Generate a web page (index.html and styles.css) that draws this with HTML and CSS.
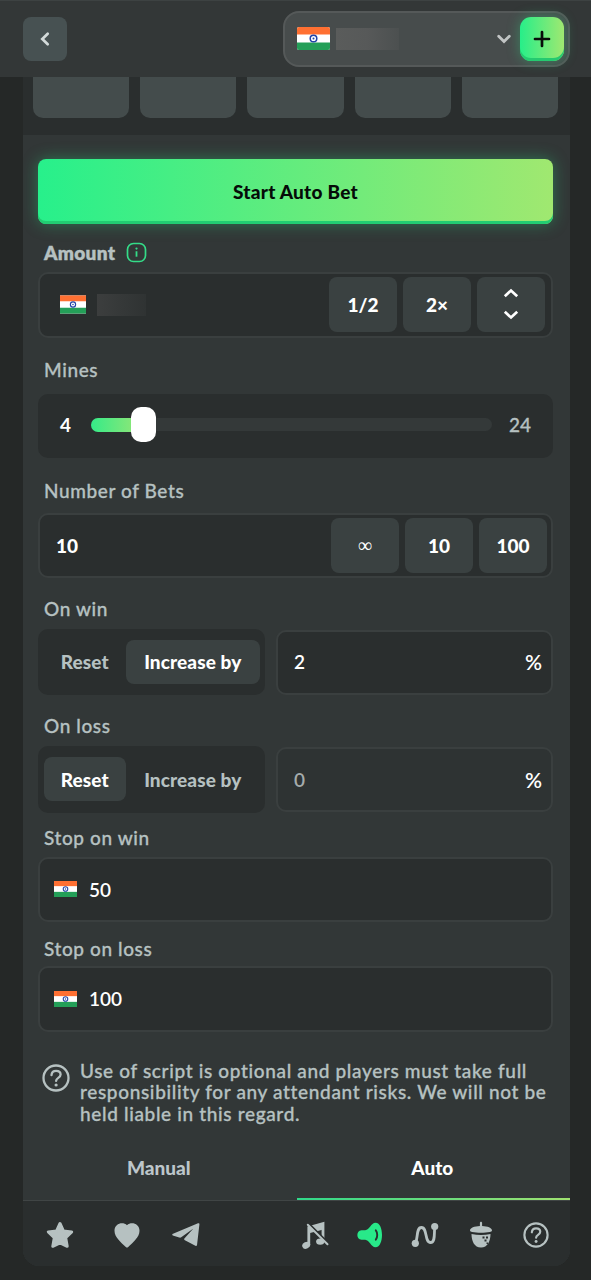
FILE: index.html
```
<!DOCTYPE html>
<html lang="en">
<head>
  <meta charset="UTF-8">
  <meta name="viewport" content="width=device-width, initial-scale=1.0">
  <title>Mines</title>
  <link rel="stylesheet" href="styles.css">
</head>
<body>
  <svg class="Sprite" aria-hidden="true">
    <symbol id="flag" viewBox="0 0 33 23">
      <path fill="#fff" d="M0 0h33v23H0z"/>
      <path fill="#ff7032" d="M0 0h33v7.4H0z"/>
      <path fill="#249f58" d="M0 15.6h33V23H0z"/>
      <circle cx="16.5" cy="11.5" r="3.3" fill="#fff" stroke="#2445a8" stroke-width="1.5"/>
      <circle cx="16.5" cy="11.5" r="1" fill="#2445a8"/>
    </symbol>
    <symbol id="help" viewBox="0 0 28 28">
      <g fill="none" stroke="currentColor" stroke-width="2.3" stroke-linecap="round">
        <circle cx="14" cy="14" r="12.5"/>
        <path d="M9.5 11.1c.2-2.600 2-4.300 4.600-4.300 2.700 0 4.500 1.500 4.500 3.800 0 3.400-4.500 3.200-4.500 6.300"/>
      </g>
      <circle cx="14.100" cy="21" r="1.600" fill="currentColor"/>
    </symbol>
  </svg>

  <header class="Header">
    <button class="Header_Back" aria-label="Back">
      <svg width="12" height="16" viewBox="0 0 12 16"><path d="M8.700 2.700 3.300 8l5.400 5.300" fill="none" stroke="#d3dada" stroke-width="2.700" stroke-linecap="round"/></svg>
    </button>
    <div class="Wallet">
      <svg class="Wallet_Flag" width="33" height="23"><use href="#flag"/></svg>
      <span class="Wallet_Balance"></span>
      <svg class="Wallet_Arrow" width="16" height="12" viewBox="0 0 16 12"><path d="m2.700 3.200 5.300 5.300 5.300-5.300" fill="none" stroke="#c2c5c5" stroke-width="2.800" stroke-linecap="round"/></svg>
      <button class="Wallet_Add" aria-label="Deposit">
        <svg width="18" height="18" viewBox="0 0 18 18"><path d="M9 2v14M2 9h14" stroke="#080d0a" stroke-width="2.700" stroke-linecap="round"/></svg>
      </button>
    </div>
  </header>

  <main class="Game">
    <div class="Tiles">
      <span class="Tile"></span>
      <span class="Tile"></span>
      <span class="Tile"></span>
      <span class="Tile"></span>
      <span class="Tile"></span>
    </div>

    <div class="Panel">
      <button class="Start">Start Auto Bet</button>

      <div class="Label -amount">
        <span class="Label_Text">Amount</span>
        <svg width="21" height="21" viewBox="0 0 21 21"><rect x="1.500" y="1.500" width="18" height="18" rx="6" fill="none" stroke="#34dc88" stroke-width="1.700"/><path d="M10.500 9.300v5.400" stroke="#34dc88" stroke-width="1.800"/><circle cx="10.500" cy="6.600" r="1.100" fill="#34dc88"/></svg>
      </div>
      <div class="Field -amount">
        <svg width="26" height="19"><use href="#flag"/></svg>
        <span class="Field_Hidden"></span>
        <div class="Field_Buttons">
          <button class="Chip">1/2</button>
          <button class="Chip">2×</button>
          <button class="Chip" aria-label="Adjust">
            <svg width="18" height="38" viewBox="0 0 18 38"><path d="m2.800 11.200 6.200-5.700 6.200 5.700M2.800 26.800 9 32.500l6.200-5.700" fill="none" stroke="#fff" stroke-width="2.700"/></svg>
          </button>
        </div>
      </div>

      <div class="Label -mines">Mines</div>
      <div class="Slider">
        <span class="Slider_Value">4</span>
        <div class="Slider_Track">
          <div class="Slider_Fill"></div>
          <div class="Slider_Thumb"></div>
        </div>
        <span class="Slider_Max">24</span>
      </div>

      <div class="Label -bets">Number of Bets</div>
      <div class="Field -bets">
        <span class="Field_Value -bold">10</span>
        <div class="Field_Buttons">
          <button class="Chip -infinity">∞</button>
          <button class="Chip">10</button>
          <button class="Chip">100</button>
        </div>
      </div>

      <div class="Label -win">On win</div>
      <div class="Row">
        <div class="Toggle">
          <button class="Toggle_Item -reset">Reset</button>
          <button class="Toggle_Item -increase -active">Increase by</button>
        </div>
        <div class="Field -percent">
          <span class="Field_Value">2</span>
          <span class="Field_Unit">%</span>
        </div>
      </div>

      <div class="Label -loss">On loss</div>
      <div class="Row -loss">
        <div class="Toggle">
          <button class="Toggle_Item -reset -active">Reset</button>
          <button class="Toggle_Item -increase">Increase by</button>
        </div>
        <div class="Field -percent -disabled">
          <span class="Field_Value">0</span>
          <span class="Field_Unit">%</span>
        </div>
      </div>

      <div class="Label -stopWin">Stop on win</div>
      <div class="Field -stop">
        <svg width="23" height="16"><use href="#flag"/></svg>
        <span class="Field_Value">50</span>
      </div>

      <div class="Label -stopLoss">Stop on loss</div>
      <div class="Field -stop -last">
        <svg width="23" height="16"><use href="#flag"/></svg>
        <span class="Field_Value">100</span>
      </div>

      <div class="Note">
        <svg width="28" height="28"><use href="#help"/></svg>
        <p class="Note_Text">
          <span class="Note_Line">Use of script is optional and players must take full</span>
          <span class="Note_Line">responsibility for any attendant risks. We will not be</span>
          <span class="Note_Line">held liable in this regard.</span>
        </p>
      </div>
    </div>

    <nav class="Tabs">
      <a class="Tab">Manual</a>
      <a class="Tab -active">Auto</a>
    </nav>

    <footer class="Tools">
      <svg width="28" height="28" viewBox="0 0 28 28"><path d="m14 2.500 3.400 7.400 8.300 1-6 5.800 1.500 8.600-7.200-3.400-7.200 3.400 1.500-8.600-6-5.800 8.300-1z" fill="currentColor" stroke="currentColor" stroke-width="3" stroke-linejoin="round"/></svg>
      <svg class="Tools_Heart" width="28" height="28" viewBox="0 0 28 28"><path d="M12.800 25.900C8 21.300 1.500 16.300 1.500 9.700 1.500 2.400 10 .3 14 4.300c4-4 12.500-1.900 12.500 5.400 0 6.600-6.500 11.600-11.300 16.200-.8.700-1.600.7-2.400 0z" fill="currentColor"/></svg>
      <svg class="Tools_Send" width="28" height="26" viewBox="0 0 28 26"><path d="M.8 13.400c-.8-.4-.7-1.300.2-1.600L26 1.300c1-.4 1.500.1 1.400 1.100l-2.300 20c-.1 1.400-1 1.900-2.200 1.200l-10-5.400c-1-.5-1-1.200-.3-2l8.800-9.600L9.600 15c-.8.6-1.500.8-2.400.5z" fill="currentColor"/></svg>
      <svg class="Tools_Music" width="28" height="28" viewBox="0 0 28 28"><path d="M7.800 24V6.600L22 2.700V20" fill="none" stroke="currentColor" stroke-width="2.800"/><path d="M8 6.300 23 2v6.300l-7 2L9 12z" fill="currentColor"/><ellipse cx="5.200" cy="24.300" rx="4.100" ry="3.300" fill="currentColor" transform="rotate(-25 5.200 24.300)"/><ellipse cx="19.200" cy="20.600" rx="4.100" ry="3.200" fill="currentColor"/><path d="m7.800 2.700 20 20" stroke="#2a2e2e" stroke-width="2.200"/><path d="m6.800 3.800 19.700 19.500" stroke="currentColor" stroke-width="2" stroke-linecap="round"/></svg>
      <svg class="Tools_Sound" width="28" height="28" viewBox="0 0 28 28"><path d="M5.500 9.300h3.700C13.500 9 15 1.800 19.500 1.800 24 1.800 26 8 26 14s-2 12.200-6.500 12.200c-4.500 0-6-7.200-10.300-7.500H5.500C0 18.700 0 9.300 5.500 9.300z" fill="#28e989"/><path d="M19.800 9.300c1.900 2.400 1.900 7 0 9.400" fill="none" stroke="#2a2e2e" stroke-width="1.900" stroke-linecap="round"/></svg>
      <svg class="Tools_Curve" width="28" height="28" viewBox="0 0 28 28"><path d="M4.500 22C7.200 17 5 6.500 10.500 6.500c6 0 3 15 9 15 5 0 3.500-9 4.200-15" fill="none" stroke="currentColor" stroke-width="2.800"/><circle cx="4.300" cy="22.300" r="3.600" fill="currentColor"/><circle cx="23.700" cy="5.500" r="3.600" fill="currentColor"/></svg>
      <svg class="Tools_Acorn" width="24" height="28" viewBox="0 0 24 28"><path d="M10.900 1.800c.1-1.500 2.100-1.500 2.200 0V5C18.500 5.200 23 7 23 9.200c0 1-1 1.500-2.200 1.800-5 1.100-12.600 1.100-17.600 0C2 10.700 1 10.200 1 9.200 1 7 5.500 5.200 10.900 5zM2.500 13c6 1.300 13 1.300 19 0 0 7-2.800 13.500-9.500 13.500S2.500 20 2.500 13z" fill="currentColor"/><path d="M13.500 15.500h2v2h-2zm3.500 0h2v2h-2zm-1.500 3h2v2h-2zm2 3h1.500V23h-1.500z" fill="#2a2e2e"/></svg>
      <svg class="Tools_Help" width="26" height="26"><use href="#help"/></svg>
    </footer>
  </main>
</body>
</html>
```
FILE: styles.css
```
* {
  box-sizing: border-box;
}

body {
  --_panel: #323737;
  --_dark: #2a2e2e;
  --_chip: #3a4141;
  --_line: #404545;
  --_gray: #b6c1c1;

  height: 1280px;
  margin: 0;
  overflow: hidden;
  background-color: #252827;
  color: #fff;
  font-family: Lato, "Liberation Sans", sans-serif;
  font-size: 19px;
  font-weight: 500;
}

button {
  padding: 0;
  border: 0;
  color: inherit;
  font: inherit;
}

svg {
  display: block;
  flex-shrink: 0;
}

.Sprite {
  position: absolute;
  width: 0;
  height: 0;
}

/* ヘッダー */
.Header {
  display: flex;
  align-items: center;
  justify-content: space-between;
  height: 77px;
  padding: 0 21px 1px 23px;
  border-top: 1px solid #3d4242;
  background-color: #333737;
}

.Header_Back {
  display: grid;
  place-items: center;
  width: 44px;
  height: 44px;
  border-radius: 8px;
  background-color: #475152;
}

.Wallet {
  display: flex;
  align-items: center;
  width: 287px;
  height: 56px;
  padding: 0 4px 0 12px;
  border: 2px solid #555959;
  border-radius: 16px;
  background-color: #474c4c;
}

.Wallet_Flag {
  border-radius: 2px;
}

.Wallet_Balance {
  width: 63px;
  height: 22px;
  margin-left: 6px;
  background: linear-gradient(90deg, #5a5c5b, #575959 50%, #4c5050);
}

.Wallet_Arrow {
  margin-left: auto;
}

.Wallet_Add {
  display: grid;
  place-items: center;
  width: 44px;
  height: 44px;
  margin-left: 8px;
  border-radius: 11px;
  background: linear-gradient(90deg, #27ee89, #9fe871);
  box-shadow: inset 0 -3px #25ca70, 0 0 13px rgba(40, 237, 137, 0.35);
}

.Game {
  width: 547px;
  height: 1189px;
  margin-left: 23px;
  overflow: hidden;
  border-radius: 0 0 16px 16px;
  background-color: var(--_panel);
}

.Tiles {
  display: grid;
  grid-template-columns: repeat(5, 1fr);
  gap: 11px;
  height: 58px;
  padding: 0 12px 17px 10px;
  background-color: var(--_dark);
}

.Tile {
  border-radius: 0 0 10px 10px;
  background-color: #444c4c;
}

.Panel {
  height: 1003px;
  padding: 24px 17px 0 15px;
}

.Start {
  display: block;
  width: 100%;
  height: 65px;
  padding-bottom: 1px;
  border-radius: 8px;
  background: linear-gradient(90deg, #27f08b, #a0e870);
  box-shadow: inset 0 -3px #22cd72, 0 0 16px rgba(40, 237, 137, 0.35);
  color: #050b08;
  font-weight: 900;
  letter-spacing: 0.25px;
}

.Label {
  display: flex;
  align-items: center;
  height: 24px;
  padding-bottom: 2px;
  margin-left: 6px;
  color: var(--_gray);
  letter-spacing: 0.6px;
  -webkit-text-stroke: 0.3px;
}

.Label.-amount {
  gap: 11px;
  margin-top: 17px;
  margin-bottom: 7px;
  padding-bottom: 1px;
  font-weight: 800;
  letter-spacing: 0.3px;
}

.Label.-mines {
  margin-top: 20px;
  margin-bottom: 12px;
}

.Label.-bets {
  margin-top: 21px;
  margin-bottom: 10px;
}

.Label.-win,
.Label.-loss {
  margin-top: 19px;
  margin-bottom: 8px;
}

.Label.-stopWin {
  margin-top: 13px;
  margin-bottom: 7px;
}

.Label.-stopLoss {
  margin-top: 15px;
  margin-bottom: 5px;
}

/* 入力欄 */
.Field {
  display: flex;
  align-items: center;
  height: 65px;
  padding: 0 16px;
  border: 2px solid #3a3f3f;
  border-radius: 10px;
  background-color: var(--_dark);
}

.Field.-amount {
  height: 66px;
  padding-bottom: 1px;
  padding-left: 20px;
  padding-right: 6px;
}

.Field.-bets {
  padding-right: 4px;
}

.Field.-stop {
  gap: 12px;
  padding-bottom: 1px;
  padding-left: 14px;
}

.Field.-last {
  height: 66px;
}

.Field.-percent {
  flex: 1;
  justify-content: space-between;
  padding-bottom: 1px;
  padding-right: 9px;
}

.Field.-disabled {
  background-color: #2e3333;
}

.Field.-disabled .Field_Value {
  color: #a5acac;
}

.Field_Hidden {
  width: 49px;
  height: 22px;
  margin-left: 11px;
  background: linear-gradient(90deg, #3c3e3e, #2f3333);
}

.Field_Value {
  font-weight: 600;
}

.Field_Value.-bold {
  padding-bottom: 1px;
  font-weight: 900;
}

.Field_Unit {
  font-size: 21px;
  font-weight: 600;
}

.Field_Buttons {
  display: flex;
  gap: 6px;
  margin-left: auto;
}

.Chip {
  display: grid;
  place-items: center;
  width: 68px;
  height: 55px;
  padding-bottom: 1px;
  border-radius: 8px;
  background-color: var(--_chip);
  font-weight: 900;
}

.Chip.-infinity {
  font-family: "Liberation Serif", serif;
  font-size: 20px;
  font-weight: 400;
}

/* スライダー */
.Slider {
  display: flex;
  align-items: center;
  height: 64px;
  padding: 0 22px 3px;
  border-radius: 10px;
  background-color: var(--_dark);
}

.Slider_Value {
  width: 31px;
  padding-bottom: 1px;
  font-weight: 700;
}

.Slider_Track {
  display: flex;
  align-items: center;
  width: 401px;
  height: 13px;
  border-radius: 7px;
  background-color: #343939;
}

.Slider_Fill {
  width: 44px;
  height: 14px;
  border-radius: 7px 0 0 7px;
  background: linear-gradient(90deg, #35eb88, #8be678);
}

.Slider_Thumb {
  width: 25px;
  height: 35px;
  margin-left: -4px;
  border-radius: 10px;
  background-color: #fff;
}

.Slider_Max {
  margin-left: auto;
  padding-bottom: 1px;
  color: var(--_gray);
  -webkit-text-stroke: 0.3px;
}

/* 切り替えボタン */
.Row {
  display: flex;
  align-items: center;
  gap: 11px;
  height: 66px;
}

.Row.-loss {
  height: 67px;
}

.Toggle {
  display: flex;
  align-items: center;
  width: 227px;
  height: 100%;
  padding: 0 5px 1px 6px;
  border-radius: 10px;
  background-color: var(--_dark);
}

.Toggle_Item {
  height: 44px;
  border-radius: 8px;
  background: none;
  color: var(--_gray);
  font-weight: 900;
  letter-spacing: 0.1px;
}

.Toggle_Item.-reset {
  width: 82px;
}

.Toggle_Item.-increase {
  width: 135px;
}

.Toggle_Item.-active {
  background-color: var(--_chip);
  color: #fff;
}

.Note {
  display: flex;
  gap: 10px;
  margin-top: 28px;
  margin-left: 4px;
  color: var(--_gray);
}

.Note svg {
  margin-top: 4px;
}

.Note_Text {
  margin: 0;
  line-height: 21.3px;
  letter-spacing: 0.65px;
  white-space: nowrap;
  -webkit-text-stroke: 0.3px;
}

.Note_Line {
  display: block;
}

.Tabs {
  display: grid;
  grid-template-columns: 1fr 1fr;
  height: 63px;
  border-bottom: 1px solid var(--_line);
}

.Tab {
  display: grid;
  place-items: center;
  padding-right: 2px;
  padding-bottom: 4px;
  color: #bdc6ca;
  font-weight: 900;
}

.Tab.-active {
  padding-bottom: 2px;
  border-bottom: 2px solid;
  border-image: linear-gradient(90deg, #2fd98a, #a0e271) 1;
  color: #fff;
}

.Tools {
  display: flex;
  align-items: center;
  height: 65px;
  padding: 3px 21px 0 23px;
  background-color: var(--_dark);
  color: var(--_gray);
}

.Tools_Heart {
  margin-left: 39px;
}

.Tools_Send {
  margin-left: 31px;
}

.Tools_Music {
  margin-left: auto;
}

.Tools_Sound {
  margin-left: 27px;
}

.Tools_Curve {
  margin-left: 27px;
}

.Tools_Acorn {
  margin-left: 30px;
}

.Tools_Help {
  margin-left: 30px;
}
```
